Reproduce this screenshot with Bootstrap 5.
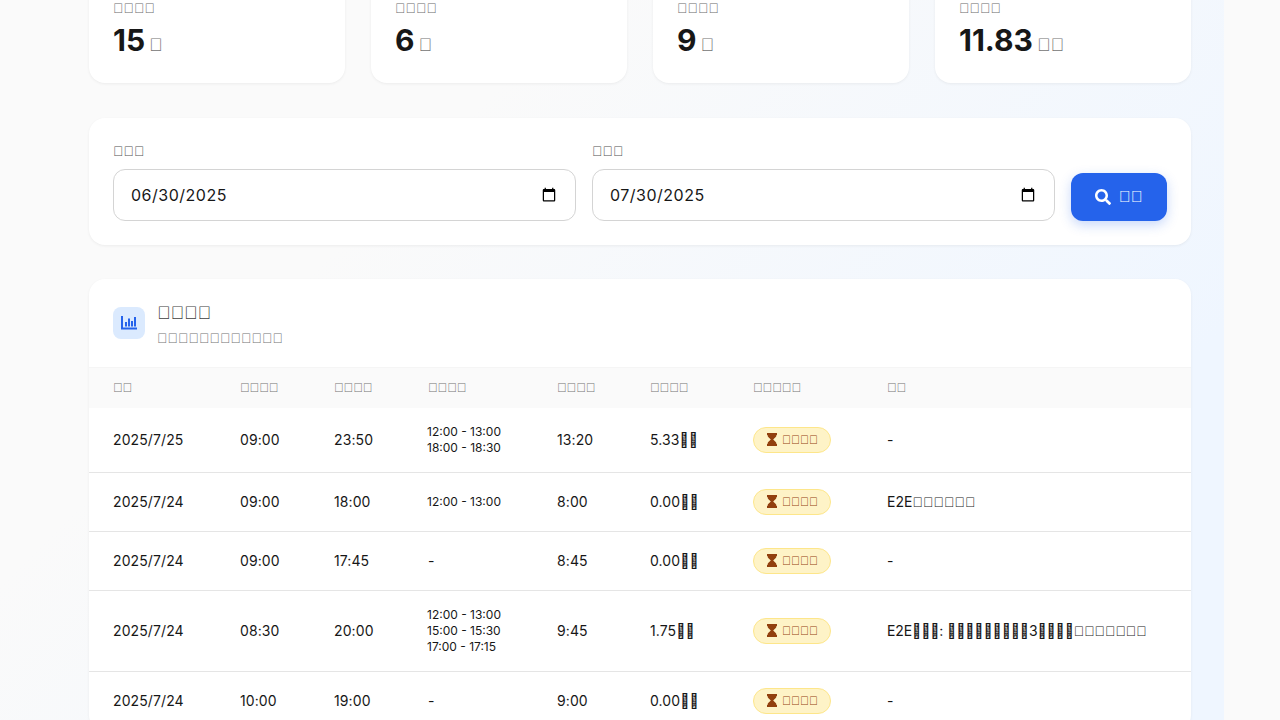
<!doctype html><html lang="ja"><head><meta charset="utf-8"><link href="https://cdn.jsdelivr.net/npm/bootstrap@5.3.0/dist/css/bootstrap.min.css" rel="stylesheet"><style>
html,body{height:720px;overflow:hidden;background:#fafafa}
body{font-family:Inter,sans-serif;font-size:14px;color:#171717}
.tf{font-family:"Liberation Sans",sans-serif}
.pagebg{width:1224px;height:720px;padding:0 33px 0 89px;background:linear-gradient(135deg,#fafafa 30%,#eff6ff 80%);overflow:hidden}
.shell{width:1102px;margin-top:-24px}
.panel{border:0;border-radius:16px;background:#fff;box-shadow:0 1px 3px rgba(0,0,0,.06)}
.statrow{--bs-gutter-x:26px;margin-bottom:35px}
.stat{padding:24px;height:107px}
.stat-label{font-size:14px;line-height:16px;color:#6b6b6b;margin-bottom:6px}
.stat-value{font-size:30px;line-height:36px;font-weight:700;color:#171717}
.stat-unit{font-size:18px;font-weight:400;color:#737373}
.filter{padding:24px;margin-bottom:34px}
.flabel{font-size:14px;line-height:18px;color:#525252;margin-bottom:9px}
.dateinp{height:52px;border:1px solid #d4d4d4;border-radius:12px;padding:0 16px 0 17px;font-size:16px;color:#171717;letter-spacing:.5px}
.searchbtn{width:96px;height:48px;border-radius:12px;background:#2563eb;border:0;color:#fff;font-size:16px;box-shadow:0 4px 12px rgba(37,99,235,.25)}
.thead-box{padding:0 24px;border-bottom:1px solid #f5f5f5;height:89px}
.iconbox{width:32px;height:32px;border-radius:8px;background:#dbeafe;flex:none;margin-top:28px;margin-right:12px}
.headtext{margin-top:25px}
.ttl{font-size:18px;line-height:18px;color:#404040;font-weight:500}
.sub{font-size:14px;line-height:16px;color:#737373;margin-top:8px}
.logtable{table-layout:fixed;width:1102px;margin:0;--bs-table-border-color:#e5e5e5;color:#171717}
.logtable th{height:40px;padding:0 0 0 24px;background:#fafafa;font-size:12.8px;font-weight:400;color:#737373;border-bottom:0;vertical-align:middle}
.logtable td{padding:0 0 0 24px;vertical-align:middle;font-size:14px;letter-spacing:.1px;border-bottom:1px solid #e5e5e5;white-space:nowrap}
.logtable td.brk{font-size:12px;line-height:16px;letter-spacing:0;padding-left:23px}
.logtable td.notea{letter-spacing:0}
.logtable td.noteb{letter-spacing:-.1px}
.r64{height:64px}.r58{height:59px}.r80{height:81px}
.statusb{display:inline-flex;align-items:center;gap:5px;height:26px;width:78px;padding:0 12px 0 13px;border-radius:13px;border:1px solid #fde68a;background:#fef3c7;color:#92400e;font-size:12px;letter-spacing:0}
.statusb svg{flex:none}
</style></head><body>
<div class="pagebg"><div class="shell">
<div class="row statrow">
<div class="col-3"><div class="panel stat"><div class="stat-label tf">&#xF0000;&#xF0000;&#xF0000;&#xF0000;</div><div class="stat-value d-flex align-items-baseline gap-1">15<span class="stat-unit tf">&#xF0000;</span></div></div></div>
<div class="col-3"><div class="panel stat"><div class="stat-label tf">&#xF0000;&#xF0000;&#xF0000;&#xF0000;</div><div class="stat-value d-flex align-items-baseline gap-1">6<span class="stat-unit tf">&#xF0000;</span></div></div></div>
<div class="col-3"><div class="panel stat"><div class="stat-label tf">&#xF0000;&#xF0000;&#xF0000;&#xF0000;</div><div class="stat-value d-flex align-items-baseline gap-1">9<span class="stat-unit tf">&#xF0000;</span></div></div></div>
<div class="col-3"><div class="panel stat"><div class="stat-label tf">&#xF0000;&#xF0000;&#xF0000;&#xF0000;</div><div class="stat-value d-flex align-items-baseline gap-1">11.83<span class="stat-unit tf">&#xF0000;&#xF0000;</span></div></div></div>
</div>
<div class="panel filter d-flex align-items-end gap-3">
<div class="flex-fill"><div class="flabel tf">&#xF0000;&#xF0000;&#xF0000;</div><input type="date" class="form-control dateinp" value="2025-06-30"></div>
<div class="flex-fill"><div class="flabel tf">&#xF0000;&#xF0000;&#xF0000;</div><input type="date" class="form-control dateinp" value="2025-07-30"></div>
<button class="btn searchbtn d-flex align-items-center justify-content-center gap-2 flex-none" type="button"><svg width="16" height="16" viewBox="0 0 512 512" fill="#fff"><path d="M505 442.700L405.300 343c-4.500-4.500-10.600-7-17-7H372c27.600-35.300 44-79.700 44-128C416 93.100 322.900 0 208 0S0 93.100 0 208s93.100 208 208 208c48.300 0 92.700-16.400 128-44v16.300c0 6.400 2.500 12.500 7 17l99.700 99.700c9.400 9.400 24.600 9.400 33.900 0l28.300-28.300c9.400-9.400 9.400-24.600.1-34zM208 336c-70.700 0-128-57.200-128-128 0-70.700 57.200-128 128-128 70.700 0 128 57.200 128 128 0 70.700-57.200 128-128 128z"/></svg><span class="tf">&#xF0000;&#xF0000;</span></button>
</div>
<div class="panel overflow-hidden">
<div class="thead-box d-flex align-items-start"><div class="iconbox d-flex align-items-center justify-content-center"><svg width="16" height="14" viewBox="0 0 16 14" fill="#2563eb"><rect x="0" y="0" width="2" height="13"/><rect x="0" y="11.500" width="16" height="2"/><rect x="4" y="6" width="2" height="4.500"/><rect x="7" y="2.500" width="2" height="8"/><rect x="10" y="5" width="2" height="5.500"/><rect x="13" y="1" width="2" height="9.500"/></svg></div><div class="headtext"><div class="ttl tf">&#xF0000;&#xF0000;&#xF0000;&#xF0000;</div><div class="sub tf">&#xF0000;&#xF0000;&#xF0000;&#xF0000;&#xF0000;&#xF0000;&#xF0000;&#xF0000;&#xF0000;&#xF0000;&#xF0000;&#xF0000;</div></div></div>
<table class="table logtable"><colgroup><col style="width:127px"><col style="width:94px"><col style="width:94px"><col style="width:129px"><col style="width:93px"><col style="width:103px"><col style="width:134px"><col></colgroup>
<thead><tr><th class="tf">&#xF0000;&#xF0000;</th><th class="tf">&#xF0000;&#xF0000;&#xF0000;&#xF0000;</th><th class="tf">&#xF0000;&#xF0000;&#xF0000;&#xF0000;</th><th class="tf">&#xF0000;&#xF0000;&#xF0000;&#xF0000;</th><th class="tf">&#xF0000;&#xF0000;&#xF0000;&#xF0000;</th><th class="tf">&#xF0000;&#xF0000;&#xF0000;&#xF0000;</th><th class="tf">&#xF0000;&#xF0000;&#xF0000;&#xF0000;&#xF0000;</th><th class="tf">&#xF0000;&#xF0000;</th></tr></thead>
<tbody>
<tr class="r64"><td>2025/7/25</td><td>09:00</td><td>23:50</td><td class="brk">12:00 - 13:00<br>18:00 - 18:30</td><td>13:20</td><td>5.33&#xF0000;&#xF0000;</td><td><span class="statusb"><svg width="10" height="13" viewBox="0 0 10 13" fill="#92400e"><path d="M0 0h10v2H9.500c0 2-2.200 3.300-3.300 4.500 1.100 1.200 3.300 2.500 3.300 4.500h.5v2H0v-2h.5c0-2 2.200-3.300 3.300-4.500C2.700 5.300 .5 4 .5 2H0z"/></svg><span class="tf">&#xF0000;&#xF0000;&#xF0000;&#xF0000;</span></span></td><td>-</td></tr>
<tr class="r58"><td>2025/7/24</td><td>09:00</td><td>18:00</td><td class="brk">12:00 - 13:00</td><td>8:00</td><td>0.00&#xF0000;&#xF0000;</td><td><span class="statusb"><svg width="10" height="13" viewBox="0 0 10 13" fill="#92400e"><path d="M0 0h10v2H9.500c0 2-2.200 3.300-3.300 4.500 1.100 1.200 3.300 2.500 3.300 4.500h.5v2H0v-2h.5c0-2 2.200-3.300 3.300-4.500C2.700 5.300 .5 4 .5 2H0z"/></svg><span class="tf">&#xF0000;&#xF0000;&#xF0000;&#xF0000;</span></span></td><td class="notea">E2E<span class="tf">&#xF0000;&#xF0000;&#xF0000;&#xF0000;&#xF0000;&#xF0000;</span></td></tr>
<tr class="r58"><td>2025/7/24</td><td>09:00</td><td>17:45</td><td>-</td><td>8:45</td><td>0.00&#xF0000;&#xF0000;</td><td><span class="statusb"><svg width="10" height="13" viewBox="0 0 10 13" fill="#92400e"><path d="M0 0h10v2H9.500c0 2-2.200 3.300-3.300 4.500 1.100 1.200 3.300 2.500 3.300 4.500h.5v2H0v-2h.5c0-2 2.200-3.300 3.300-4.500C2.700 5.300 .5 4 .5 2H0z"/></svg><span class="tf">&#xF0000;&#xF0000;&#xF0000;&#xF0000;</span></span></td><td>-</td></tr>
<tr class="r80"><td>2025/7/24</td><td>08:30</td><td>20:00</td><td class="brk">12:00 - 13:00<br>15:00 - 15:30<br>17:00 - 17:15</td><td>9:45</td><td>1.75&#xF0000;&#xF0000;</td><td><span class="statusb"><svg width="10" height="13" viewBox="0 0 10 13" fill="#92400e"><path d="M0 0h10v2H9.500c0 2-2.200 3.300-3.300 4.500 1.100 1.200 3.300 2.500 3.300 4.500h.5v2H0v-2h.5c0-2 2.200-3.300 3.300-4.500C2.700 5.300 .5 4 .5 2H0z"/></svg><span class="tf">&#xF0000;&#xF0000;&#xF0000;&#xF0000;</span></span></td><td class="noteb">E2E&#xF0000;&#xF0000;&#xF0000;: &#xF0000;&#xF0000;&#xF0000;&#xF0000;&#xF0000;&#xF0000;&#xF0000;&#xF0000;&#xF0000;3&#xF0000;&#xF0000;&#xF0000;&#xF0000;<span class="tf">&#xF0000;&#xF0000;&#xF0000;&#xF0000;&#xF0000;&#xF0000;&#xF0000;</span></td></tr>
<tr class="r58"><td>2025/7/24</td><td>10:00</td><td>19:00</td><td>-</td><td>9:00</td><td>0.00&#xF0000;&#xF0000;</td><td><span class="statusb"><svg width="10" height="13" viewBox="0 0 10 13" fill="#92400e"><path d="M0 0h10v2H9.500c0 2-2.200 3.300-3.300 4.500 1.100 1.200 3.300 2.500 3.300 4.500h.5v2H0v-2h.5c0-2 2.200-3.300 3.300-4.500C2.700 5.300 .5 4 .5 2H0z"/></svg><span class="tf">&#xF0000;&#xF0000;&#xF0000;&#xF0000;</span></span></td><td>-</td></tr>
</tbody></table>
</div>
</div></div>
<script src="https://cdn.jsdelivr.net/npm/bootstrap@5.3.0/dist/js/bootstrap.bundle.min.js"></script></body></html>
